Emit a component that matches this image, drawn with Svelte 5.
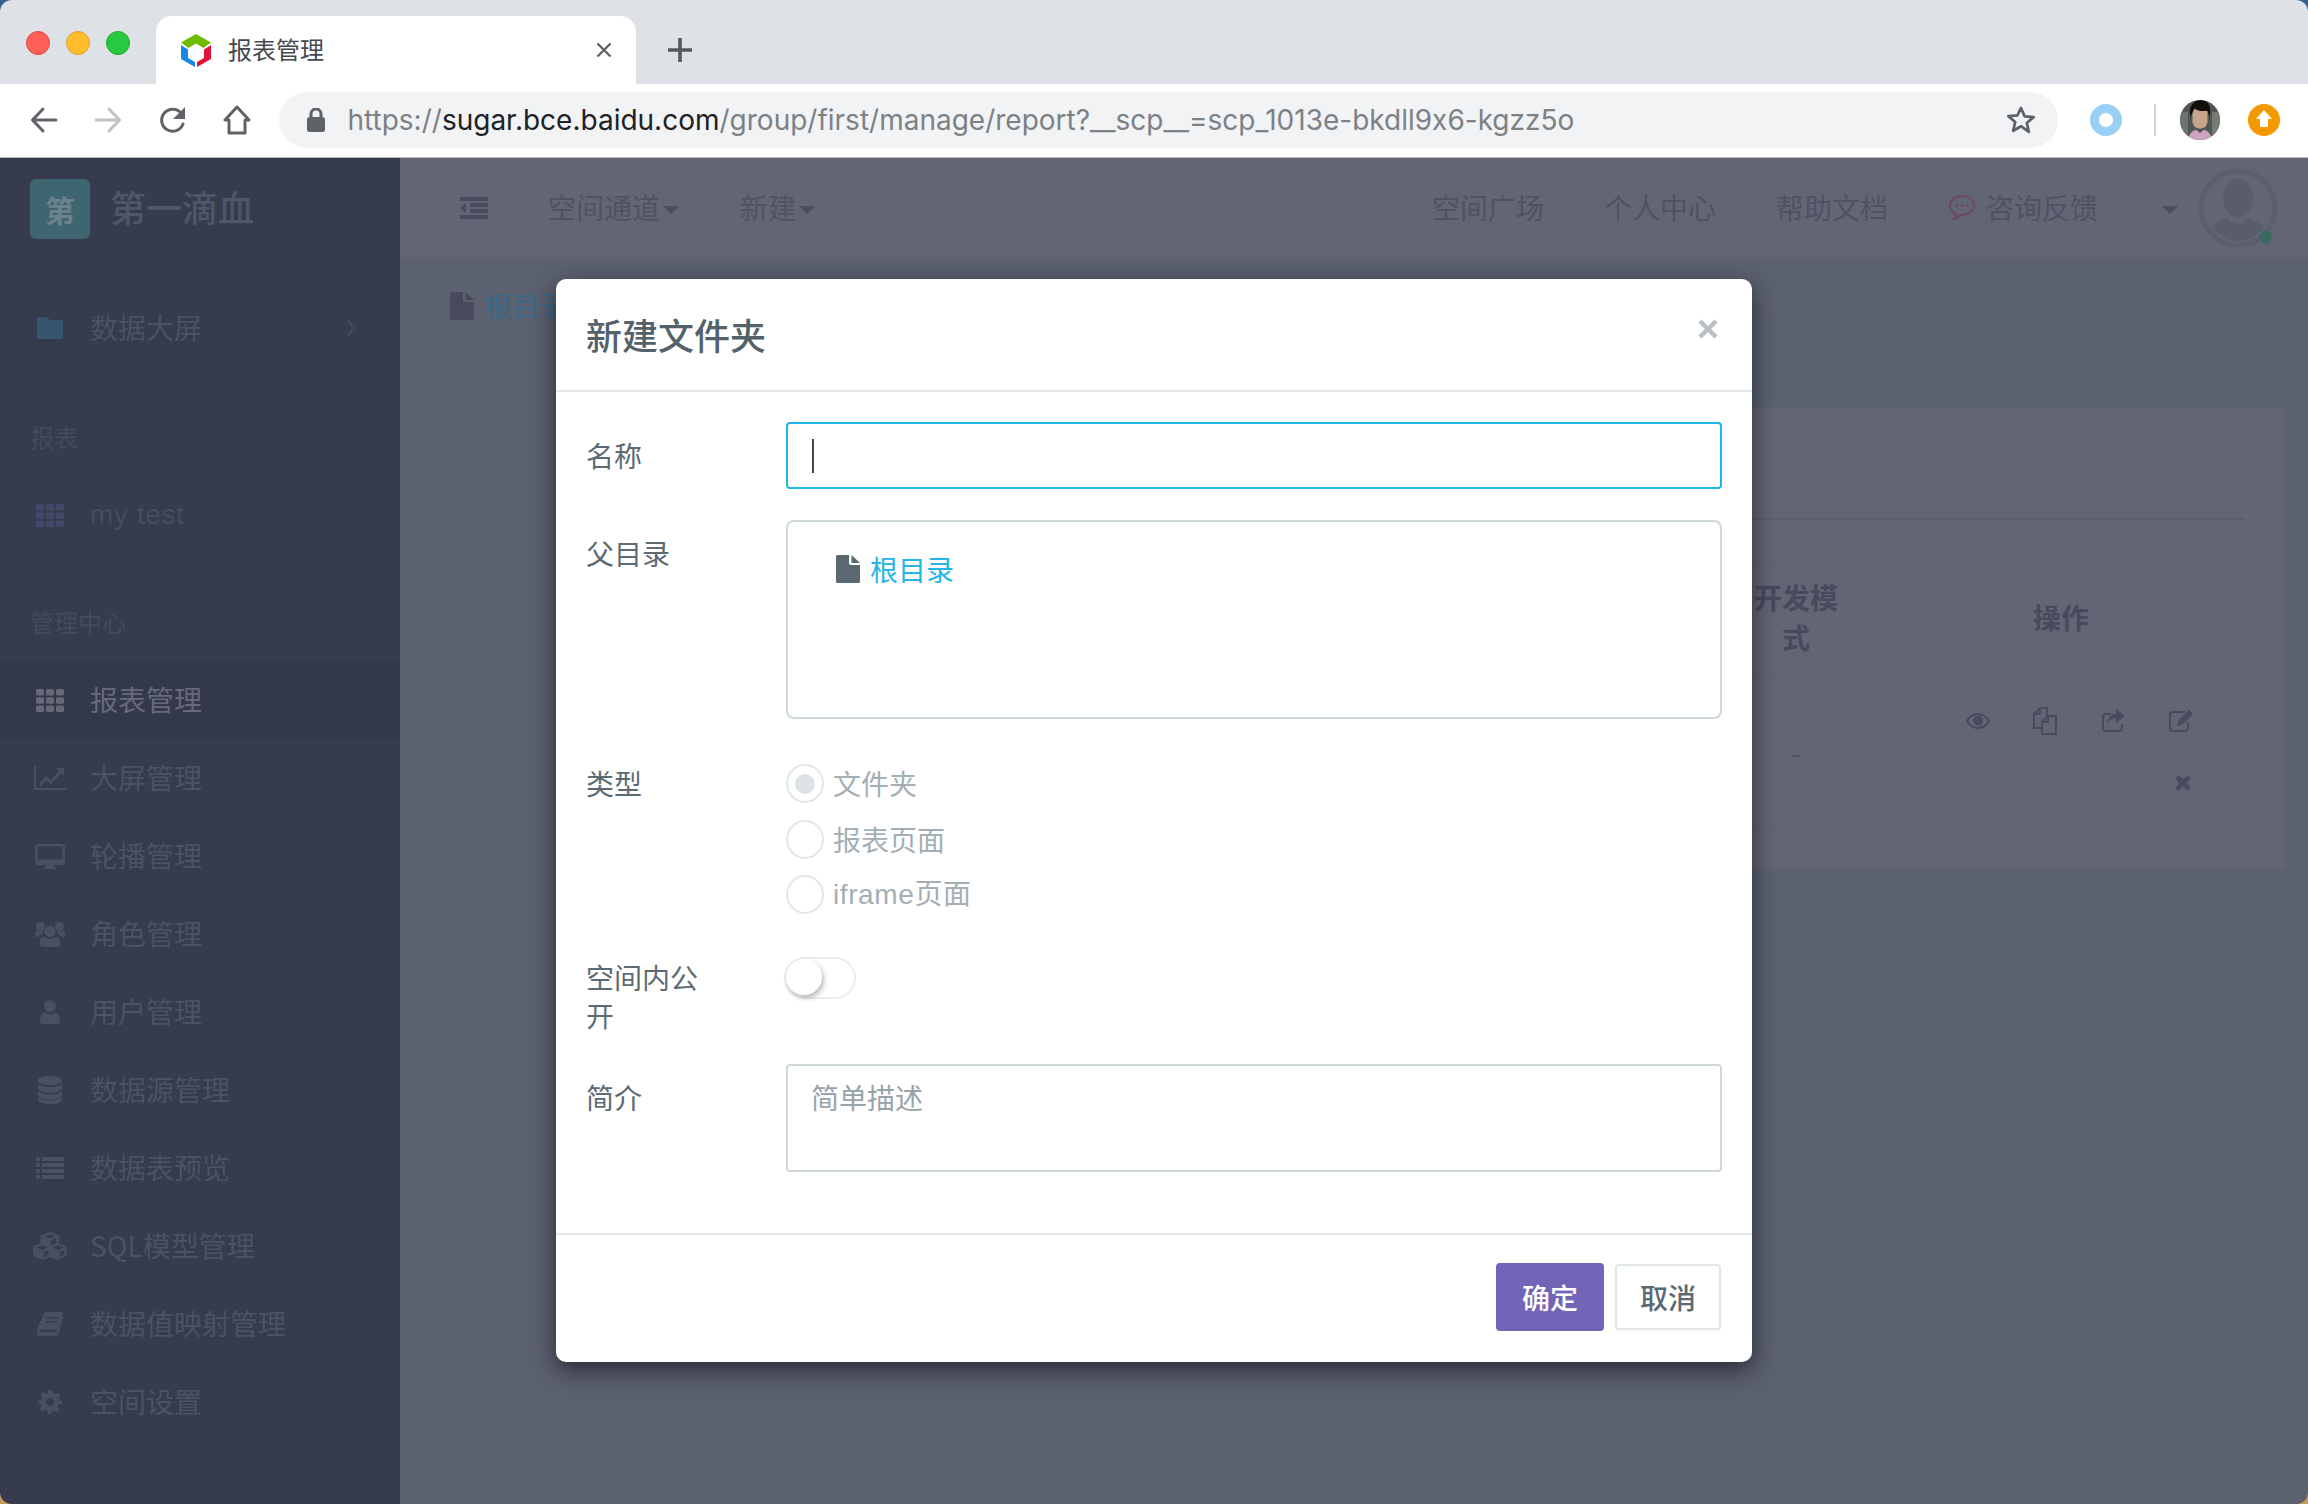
<script>
  const topItems = [
    { icon: 'th', label: '报表管理', active: true },
    { icon: 'chart', label: '大屏管理' },
    { icon: 'desktop', label: '轮播管理' },
    { icon: 'users', label: '角色管理' },
    { icon: 'user', label: '用户管理' },
    { icon: 'db', label: '数据源管理' },
    { icon: 'list', label: '数据表预览' },
    { icon: 'cubes', label: 'SQL模型管理' },
    { icon: 'book', label: '数据值映射管理' },
    { icon: 'gear', label: '空间设置' }
  ];
  const url = { a: 'https://', b: 'sugar.bce.baidu.com', c: '/group/first/manage/report?__scp__=scp_1013e-bkdll9x6-kgzz5o' };
</script>

{#snippet th(cls)}
  <svg class={cls} viewBox="0 0 28 23" width="28" height="23">
    {#each [0, 1, 2] as r}
      {#each [0, 1, 2] as c}
        <rect x={c * 10} y={r * 8.2} width="8" height="6.6" rx="1.5" />
      {/each}
    {/each}
  </svg>
{/snippet}

{#snippet icon(name)}
  {#if name === 'th'}
    {@render th('mi')}
  {:else if name === 'chart'}
    <svg class="mi" viewBox="0 0 32 24" width="32" height="24"><path d="M0 0h2v22h30v2H0z" /><path d="M5 18l7-8 5 4 8-9-3-3h8v8l-3-3-10 11-5-4-5 6z" /></svg>
  {:else if name === 'desktop'}
    <svg class="mi" viewBox="0 0 30 25" width="30" height="25"><path fill-rule="evenodd" d="M3 0h24a3 3 0 0 1 3 3v15a3 3 0 0 1-3 3h-8v2h2v2H9v-2h2v-2H3a3 3 0 0 1-3-3V3a3 3 0 0 1 3-3zm-.5 2.500v13h25v-13z" /></svg>
  {:else if name === 'users'}
    <svg class="mi" viewBox="0 0 30 25" width="30" height="25"><circle cx="15" cy="9.500" r="5.500" /><circle cx="5.500" cy="4.500" r="4.500" /><circle cx="24.500" cy="4.500" r="4.500" /><path d="M8 25c-1.500 0-3-1-3-3v-3c0-2.500 1.500-4.500 4-4.500 1.500 1.500 3.500 2 6 2s4.500-.5 6-2c2.500 0 4 2 4 4.500v3c0 2-1.500 3-3 3z" /><path d="M0 11.500c0-1.500 1-3 2.500-3 1.500 1 4 1 5.500.5-.5 1-1 2-.5 3-2 .5-3.500 1.500-4.500 3H2c-1 0-2-1-2-2zM30 11.500c0-1.500-1-3-2.500-3-1.500 1-4 1-5.500.5.5 1 1 2 .5 3 2 .5 3.500 1.500 4.500 3h1c1 0 2-1 2-2z" /></svg>
  {:else if name === 'user'}
    <svg class="mi" viewBox="0 0 20 24" width="20" height="24"><circle cx="10" cy="6" r="6" /><path d="M3 24c-2 0-3-1-3-3 0-4 1.500-8 5-8.500 1.500 1.500 3 2 5 2s3.500-.5 5-2c3.500.5 5 4.500 5 8.500 0 2-1 3-3 3z" /></svg>
  {:else if name === 'db'}
    <svg class="mi" viewBox="0 0 24 28" width="24" height="28"><ellipse cx="12" cy="4.500" rx="12" ry="4.500" /><path d="M0 7.500c2 2.500 7 3.500 12 3.500s10-1 12-3.500V12c0 2.500-5.500 4.500-12 4.500S0 14.500 0 12zM0 15c2 2.500 7 3.500 12 3.500s10-1 12-3.500v4.500c0 2.500-5.500 4-12 4s-12-1.500-12-4zM0 21.500c2 2 7 3 12 3s10-1 12-3V24c0 2.500-5.500 4-12 4S0 26.500 0 24z" /></svg>
  {:else if name === 'list'}
    <svg class="mi" viewBox="0 0 28 22" width="28" height="22"><path d="M0 0h4v4H0zM6 0h22v4H6zM0 6h4v4H0zM6 6h22v4H6zM0 12h4v4H0zM6 12h22v4H6zM0 18h4v4H0zM6 18h22v4H6z" /></svg>
  {:else if name === 'cubes'}
    <svg class="mi" viewBox="0 0 34 28" width="34" height="28"><path fill-rule="evenodd" d="M17 0l9 3.500v8l7.500 3v9.500L24 28l-7-3-7 3-10-4V14.500l7.500-3v-8zm0 2.500L11.500 4.500 17 6.500l5.500-2zM3 15.500l6 2.500 6-2.500-6-2zM19 15.500l6 2.500 6-2.500-6-2zM10.500 20v5l5-2.200v-5zM26.500 20v5l5-2.200v-5zM18 8v5.500l5.500-2.500V5.800z" /></svg>
  {:else if name === 'book'}
    <svg class="mi" viewBox="0 0 26 24" width="26" height="24"><path fill-rule="evenodd" d="M8 0h17c1 0 1 .8.8 1.500L21 19c-.5 2-1.500 3-3.500 3H3.500C1 22 0 20.500 0 18.500c0-1 .2-1.500.3-2.500zM9 5v1.500h12L21.500 5zM8 9v1.500h12l.5-1.500zM3.500 17.500c-1.200 0-1.500 1-1.300 1.800.2.800.8 1 1.600 1h14.400c.8 0 1.200-.4 1.400-1l.4-1.800z" /><path d="M24 5l2-.5L22 20c-.5 2.500-2 4-4.500 4H3.800c-2 0-3.800-1.500-3.800-4h2c0 1.500 1 2 2 2h13.500c1.800 0 2.700-.8 3.200-2.500z" /></svg>
  {:else if name === 'gear'}
    <svg class="mi" viewBox="0 0 24 24" width="24" height="24"><path fill-rule="evenodd" d="M10 0h4l.6 3.300 2.300 1L19.700 2.400l2.800 2.800-1.900 2.800 1 2.300L24 11v3l-3.400.6-1 2.300 1.900 2.800-2.800 2.800-2.800-1.900-2.300 1L13 24h-3l-.6-3.300-2.300-1-2.800 1.900-2.800-2.800 1.900-2.800-1-2.300L0 13.400v-3l3.400-.6 1-2.300L2.500 4.700l2.800-2.800 2.800 1.900 2.300-1zm2 8a4 4 0 1 0 0 8 4 4 0 0 0 0-8z" /></svg>
  {/if}
{/snippet}

{#snippet fileIcon(cls)}
  <svg class={cls} viewBox="0 0 24 28" width="24" height="28"><path d="M1.500 0H13v8a2 2 0 0 0 2 2h9v16.500a1.500 1.500 0 0 1-1.500 1.500h-21A1.500 1.500 0 0 1 0 26.500v-25A1.500 1.500 0 0 1 1.500 0z" /><path d="M15.500 0L24 8h-8.500z" /></svg>
{/snippet}

<div class="window">
  <header class="tabstrip">
    <div class="lights">
      <i class="light red"></i><i class="light yellow"></i><i class="light green"></i>
    </div>
    <div class="tab">
      <svg class="favicon" viewBox="0 0 30 33" width="30" height="33">
        <path fill="#6fb900" d="M15 0l15 8.500L22.500 14 15 9.500 7.500 14 0 8.500z" />
        <path fill="#1a86e8" d="M0 11l7 4.500v8.500l7 4v5L0 25z" />
        <path fill="#e0123c" d="M30 11l-7 4.500v8.500l-7 4v5l14-8z" />
      </svg>
      <span class="tab-title">报表管理</span>
      <svg class="tab-close" viewBox="0 0 16 16" width="16" height="16"><path d="M1.500 1.500l13 13M14.500 1.500l-13 13" /></svg>
    </div>
    <svg class="plus" viewBox="0 0 24 24" width="24" height="24"><path d="M12 1v22M1 12h22" /></svg>
  </header>

  <div class="toolbar">
    <svg class="tb" viewBox="0 0 28 28" width="28" height="28"><path d="M26 14H3M13 3L2.500 14 13 25" /></svg>
    <svg class="tb dim" viewBox="0 0 28 28" width="28" height="28"><path d="M2 14h23M15 3l10.500 11L15 25" /></svg>
    <svg class="tb reload" viewBox="0 0 30 30" width="30" height="30"><path d="M25 19a11 11 0 1 1-2-11" /><path class="solid" d="M27 2v12H15z" /></svg>
    <svg class="tb" viewBox="0 0 28 30" width="28" height="30"><path d="M14 2L2 15h4v13h16V15h4z" /></svg>
    <div class="omnibox">
      <svg class="lock" viewBox="0 0 18 24" width="18" height="24"><rect x="0" y="9" width="18" height="15" rx="2.500" /><path d="M4 10V6a5 5 0 0 1 10 0v4" /></svg>
      <span class="url"><span class="g">{url.a}</span><span class="d">{url.b}</span><span class="g">{url.c}</span></span>
      <svg class="star" viewBox="0 0 30 30" width="30" height="30"><path d="M15 3l3.600 8.300 9 .8-6.800 5.900 2 8.800L15 21.200l-7.800 4.600 2-8.800-6.800-5.900 9-.8z" /></svg>
    </div>
    <div class="ext-ring"></div>
    <div class="ext-sep"></div>
    <div class="avatar-photo">
      <svg viewBox="0 0 40 40" width="40" height="40">
        <rect width="40" height="40" fill="#4f5552" />
        <rect x="0" y="12" width="8" height="28" fill="#6f736d" />
        <rect x="32" y="12" width="8" height="28" fill="#777a73" />
        <path fill="#c9a48c" d="M12.500 13c0-4 3.500-6 7.500-6s7.500 2 7.500 6v8c0 5-3.500 7.500-7.500 7.500s-7.500-2.500-7.500-7.500z" />
        <path fill="#100d0c" d="M10.500 17C8 6 14 0 21 0s11 6 8.500 17l-2-6.500c-3 1-9.500 1-13-2-1 2-2 4-4 8.500z" />
        <path fill="#cfa3bf" d="M8 40c1-7 5-10 8.500-10l3.500 3 3.500-3c3.500 0 7.500 3 8.500 10z" />
      </svg>
    </div>
    <div class="ext-update">
      <svg viewBox="0 0 16 20" width="16" height="20"><path d="M8 0l8 9h-4v8H4V9H0z" /></svg>
    </div>
  </div>

  <div class="page">
    <aside class="sidebar">
      <div class="brand">
        <div class="brand-mark">第</div>
        <div class="brand-name">第一滴血</div>
      </div>
      <div class="nav-section first">
        <div class="nav-item">
          <span class="nav-icon">
            <svg class="folder" viewBox="0 0 26 22" width="26" height="22"><path d="M2 0h8l3 3h11a2 2 0 0 1 2 2v15a2 2 0 0 1-2 2H2a2 2 0 0 1-2-2V2a2 2 0 0 1 2-2z" /></svg>
          </span>
          <span class="nav-label">数据大屏</span>
          <svg class="chev" viewBox="0 0 10 16" width="10" height="16"><path d="M1 1l7 7-7 7" /></svg>
        </div>
      </div>
      <div class="nav-section second">
        <div class="nav-title">报表</div>
        <div class="nav-item dim">
          <span class="nav-icon">{@render th('mi purple')}</span>
          <span class="nav-label latin">my test</span>
        </div>
      </div>
      <div class="nav-section last">
        <div class="nav-title">管理中心</div>
        {#each topItems as item}
          <div class="nav-item" class:active={item.active}>
            <span class="nav-icon">{@render icon(item.icon)}</span>
            <span class="nav-label">{item.label}</span>
          </div>
        {/each}
      </div>
    </aside>

    <div class="main">
      <div class="topbar">
        <svg class="collapse" viewBox="0 0 28 22" width="28" height="22"><path d="M0 0h28v4H0zM10 6h18v4H10zM10 12h18v4H10zM0 18h28v4H0zM6 6v10l-6-5z" /></svg>
        <span class="top-link caret">空间通道</span>
        <span class="top-link caret second">新建</span>
        <div class="top-right">
          <span class="top-link">空间广场</span>
          <span class="top-link">个人中心</span>
          <span class="top-link">帮助文档</span>
          <span class="top-link feedback">
            <svg viewBox="0 0 28 28" width="28" height="28"><path d="M14 3c6.500 0 12 4 12 9.500S20.500 22 14 22h-2c-1 2-3 3.500-6 4 1.500-1.500 2-3 2-5C4 19.500 2 16 2 12.500 2 7 7.500 3 14 3z" /><circle class="dot" cx="9" cy="12.500" r="1.500" /><circle class="dot" cx="14" cy="12.500" r="1.500" /><circle class="dot" cx="19" cy="12.500" r="1.500" /></svg>
            咨询反馈
          </span>
          <i class="caret-solo"></i>
          <div class="user">
            <svg viewBox="0 0 80 80" width="80" height="80">
              <circle cx="40" cy="40" r="37" fill="none" stroke="#5a5e6d" stroke-width="5" />
              <ellipse cx="40" cy="30" rx="15" ry="19" fill="#585c6b" />
              <path d="M15 60c2-7 10-8 15-10 3 4 7 6 10 6s7-2 10-6c5 2 13 3 15 10-6 8-15 13-25 13s-19-5-25-13z" fill="#585c6b" />
            </svg>
            <i class="online"></i>
          </div>
        </div>
      </div>
      <div class="content">
        <div class="tree-pane">
          <div class="crumb">
            {@render fileIcon('crumb-file')}
            <span class="crumb-text">根目录</span>
          </div>
        </div>
        <div class="list-pane">
          <div class="card">
            <div class="card-head"></div>
            <div class="table">
              <div class="tr head">
                <div class="td fill"></div>
                <div class="td dev">开发模式</div>
                <div class="td ops">操作</div>
              </div>
              <div class="tr body">
                <div class="td fill"></div>
                <div class="td dev dash">-</div>
                <div class="td ops actions">
                  <div class="action-row">
                    <svg viewBox="0 0 24 16" width="24" height="16"><path fill-rule="evenodd" d="M12 0c5 0 9.500 3 12 8-2.500 5-7 8-12 8S2.500 13 0 8c2.500-5 7-8 12-8zm0 2C8 2 4.500 4.200 2.200 8 4.500 11.800 8 14 12 14s7.500-2.200 9.800-6C19.500 4.200 16 2 12 2z" /><circle cx="12" cy="7.500" r="5" /></svg>
                    <svg viewBox="0 0 24 28" width="24" height="28"><path class="stroke" d="M8 21H1V7l6-6h7v8M1 7h6V1" /><path class="stroke" d="M9 15l6-6h8v18H9zM9 15h6V9" /></svg>
                    <svg viewBox="0 0 24 24" width="24" height="24"><path class="stroke" d="M21 15v4a3 3 0 0 1-3 3H5a3 3 0 0 1-3-3V8a3 3 0 0 1 3-3h5" /><path d="M15 0l9 7-9 7V9.500c-4 0-7 1-9 6 0-6 3-10 9-11z" /></svg>
                    <svg viewBox="0 0 26 24" width="26" height="24"><path class="stroke" d="M20 13v6a3 3 0 0 1-3 3H5a3 3 0 0 1-3-3V6a3 3 0 0 1 3-3h12" /><path d="M21 1l4 4-11 11-5 1 1-5z" /></svg>
                  </div>
                  <div class="action-row end">
                    <svg viewBox="0 0 16 16" width="16" height="16"><path d="M3.500 0L8 4.500 12.500 0 16 3.500 11.500 8l4.500 4.500-3.500 3.500L8 11.500 3.500 16 0 12.500 4.500 8 0 3.500z" /></svg>
                  </div>
                </div>
              </div>
            </div>
          </div>
        </div>
      </div>
    </div>

    <div class="overlay">
      <div class="modal">
        <div class="modal-head">
          <span class="modal-title">新建文件夹</span>
          <svg class="modal-close" viewBox="0 0 22 22" width="22" height="22"><path d="M3 3l16 16M19 3L3 19" /></svg>
        </div>
        <div class="modal-body">
          <div class="row r-name">
            <div class="label">名称</div>
            <div class="field input focus"><i class="text-caret"></i></div>
          </div>
          <div class="row r-parent">
            <div class="label">父目录</div>
            <div class="field tree">
              {@render fileIcon('tree-file')}
              <span class="tree-link">根目录</span>
            </div>
          </div>
          <div class="row r-type">
            <div class="label">类型</div>
            <div class="radios">
              <div class="radio"><i class="circle on"></i><span>文件夹</span></div>
              <div class="radio"><i class="circle"></i><span>报表页面</span></div>
              <div class="radio"><i class="circle"></i><span class="latin">iframe页面</span></div>
            </div>
          </div>
          <div class="row r-public">
            <div class="label narrow">空间内公开</div>
            <div class="toggle"><i class="knob"></i></div>
          </div>
          <div class="row r-desc">
            <div class="label">简介</div>
            <div class="field area"><span class="placeholder">简单描述</span></div>
          </div>
        </div>
        <div class="modal-foot">
          <button class="btn primary">确定</button>
          <button class="btn plain">取消</button>
        </div>
      </div>
    </div>
  </div>
</div>

<style>
  :global(body) {
    margin: 0;
    background: linear-gradient(#35618f, #35618f 50%, #c59a62 50%);
  }
  .window {
    position: relative;
    width: 2308px;
    height: 1504px;
    overflow: hidden;
    border-radius: 12px;
    display: flex;
    flex-direction: column;
    font-family: "Noto Sans CJK SC", "Liberation Sans", sans-serif;
    font-size: 28px;
  }
  i { display: block; font-style: normal; }

  /* browser chrome */
  .tabstrip {
    height: 84px;
    flex: none;
    background: #dee1e6;
    display: flex;
    align-items: flex-end;
    box-sizing: border-box;
  }
  .lights {
    width: 156px;
    height: 84px;
    flex: none;
    box-sizing: border-box;
    padding: 31px 0 0 26px;
    display: flex;
    gap: 16px;
  }
  .light { width: 24px; height: 24px; border-radius: 50%; box-sizing: border-box; }
  .red { background: #ff5f57; border: 1px solid #e0443e; }
  .yellow { background: #ffbd2e; border: 1px solid #dea123; }
  .green { background: #28c840; border: 1px solid #1aab29; }
  .tab {
    width: 480px;
    height: 68px;
    background: #fff;
    border-radius: 16px 16px 0 0;
    display: flex;
    align-items: center;
    box-sizing: border-box;
    padding: 0 24px 0 25px;
    position: relative;
  }
  .favicon { flex: none; }
  .tab-title { margin: -3px 0 0 17px; font-size: 24px; color: #45484d; flex: 1; line-height: 32px; }
  .tab-close { fill: none; stroke: #5f6368; stroke-width: 2.400; }
  .plus { margin: 0 0 22px 32px; fill: none; stroke: #55585d; stroke-width: 3.600; stroke-linecap: round; }

  .toolbar {
    height: 74px;
    flex: none;
    box-sizing: border-box;
    background: #fff;
    border-bottom: 1px solid #b9bbbe;
    display: flex;
    align-items: center;
    padding: 0 28px 2px 30px;
    position: relative;
  }
  .tb {
    fill: none;
    stroke: #5f6368;
    stroke-width: 3;
    stroke-linejoin: round;
    stroke-linecap: round;
    flex: none;
    margin-right: 36px;
  }
  .tb.reload { margin-right: 34.500px; }
  .tb.dim { stroke: #bdc0c4; }
  .tb .solid { fill: #5f6368; stroke: none; }
  .omnibox {
    width: 1779px;
    height: 56px;
    border-radius: 28px;
    background: #f1f3f4;
    display: flex;
    align-items: center;
    flex: none;
    margin-left: -7.500px;
    padding: 0 22px 0 28px;
    box-sizing: border-box;
  }
  .lock { fill: #5f6368; flex: none; }
  .lock path { fill: none; stroke: #5f6368; stroke-width: 3; }
  .url {
    margin-left: 22.500px;
    flex: 1;
    font-family: Inter, "Liberation Sans", sans-serif;
    font-size: 28px;
    font-feature-settings: "calt" 0;
    white-space: nowrap;
    line-height: 36px;
    color: #80868b;
  }
  .url .d { color: #202124; }
  .url .g { color: #7c8186; }
  .star { fill: none; stroke: #5f6368; stroke-width: 2.800; stroke-linejoin: round; flex: none; }
  .ext-ring {
    width: 32px; height: 32px; border-radius: 50%;
    border: 9px solid #9ad0f5;
    box-sizing: border-box;
    margin-left: 32px;
    flex: none;
    background: #fff;
  }
  .ext-sep { width: 2px; height: 32px; background: #cfd1d4; margin: 0 24px 0 32px; flex: none; }
  .avatar-photo { width: 40px; height: 40px; border-radius: 50%; overflow: hidden; flex: none; }
  .avatar-photo svg { display: block; }
  .ext-update {
    width: 32px; height: 32px; border-radius: 50%;
    background: #f29900;
    margin-left: 28px;
    display: flex; align-items: center; justify-content: center;
    flex: none;
  }
  .ext-update svg { fill: #fff; }

  /* application */
  .page { flex: 1; display: flex; position: relative; min-height: 0; }
  .sidebar { width: 400px; flex: none; background: #363b4d; display: flex; flex-direction: column; color: #51576a; }
  .brand { height: 101px; flex: none; display: flex; align-items: center; padding-left: 30px; }
  .brand-mark {
    width: 60px; height: 60px; border-radius: 6px;
    background: #3e6570;
    display: flex; align-items: center; justify-content: center;
    color: #6b828d;
    font-size: 30px; font-weight: 700;
    line-height: 60px;
  }
  .brand-name { margin: -5px 0 0 20px; font-size: 36px; font-weight: 500; color: #50566a; line-height: 50px; }
  .nav-section { border-bottom: 1px solid #383d50; padding: 10px 0 20px; }
  .nav-section.first { padding: 30px 0 18px; }
  .nav-section.second { padding-top: 14px; }
  .nav-section.last { border-bottom: 0; padding-bottom: 0; }
  .nav-title {
    height: 76px; line-height: 74px;
    padding-left: 30px; font-size: 24px; color: #454a5c;
  }
  .nav-item {
    height: 78px;
    display: flex; align-items: center;
    position: relative;
    color: #4c5265;
  }
  .nav-item.active { background: #33384b; color: #666a7a; }
  .nav-item.dim { color: #464c5f; }
  .nav-icon { width: 90px; flex: none; display: flex; justify-content: center; padding-left: 10px; box-sizing: border-box; }
  .nav-label { line-height: 40px; margin-top: -2px; }
  .nav-label.latin { margin-top: 0; }
  .latin { font-family: "Liberation Sans", "Noto Sans CJK SC", sans-serif; letter-spacing: .6px; }
  .mi { fill: #4a5064; display: block; }
  .nav-item.active :global(.mi) { fill: #656978; }
  .purple { fill: #45476a; }
  .folder { fill: #36566f; display: block; }
  .chev { position: absolute; left: 347px; fill: none; stroke: #474d60; stroke-width: 2; }

  .main { flex: 1; min-width: 0; display: flex; flex-direction: column; }
  .topbar {
    height: 101px;
    flex: none;
    box-sizing: border-box;
    background: #626574;
    border-bottom: 2px solid #5e6170;
    display: flex;
    align-items: center;
    padding: 0 30px 0 60px;
    color: #4e5263;
  }
  .collapse { fill: #494c5e; flex: none; margin-right: 60px; }
  .top-link { font-size: 28px; line-height: 40px; white-space: nowrap; display: flex; align-items: center; margin-top: -2px; }
  .top-link.caret::after {
    content: "";
    border-top: 8px solid #4a4e5f;
    border-left: 8px solid transparent;
    border-right: 8px solid transparent;
    margin-left: 3px;
    margin-top: 6px;
  }
  .top-link.second { margin-left: 61px; }
  .top-right { margin-left: auto; display: flex; align-items: center; gap: 60px; }
  .feedback { gap: 10px; }
  .feedback svg { fill: none; stroke: #6e4a5c; stroke-width: 2; }
  .feedback .dot { fill: #6e4a5c; stroke: none; }
  .caret-solo {
    border-top: 8px solid #4a4e5f;
    border-left: 8px solid transparent;
    border-right: 8px solid transparent;
    margin: 4px 0 0 4px;
  }
  .user { position: relative; width: 80px; height: 80px; margin-left: -40px; flex: none; }
  .user svg { display: block; }
  .online { position: absolute; left: 62px; top: 62px; width: 12px; height: 14px; border-radius: 50%; background: #3a6a5f; }

  .content { flex: 1; display: flex; min-height: 0; background: #5c616f; }
  .tree-pane { width: 479px; flex: none; box-sizing: border-box; padding: 33px 0 0 50px; border-right: 1px solid #5a5e6b; }
  .crumb { display: flex; align-items: center; height: 28px; gap: 10px; white-space: nowrap; }
  .crumb-file { fill: #464a5c; flex: none; }
  .crumb-text { color: #3a6888; font-size: 28px; line-height: 40px; margin-top: -2px; }
  .list-pane { flex: 1; min-width: 0; box-sizing: border-box; padding: 148px 23px 0 0; }
  .card { height: 463px; background: #626574; box-sizing: border-box; padding: 0 39px 0 40px; border: 1px solid #5f6371; }
  .card-head { height: 110px; border-bottom: 2px solid #5a5e6c; }
  .table { margin-top: 42px; border: 1px solid #5e6270; height: 268px; box-sizing: border-box; display: flex; flex-direction: column; }
  .tr { display: flex; }
  .tr.head { height: 114px; border-bottom: 1px solid #5e6270; color: #464a5c; font-weight: 700; }
  .tr.body { flex: 1; }
  .td.fill { flex: 1; }
  .td.dev { width: 162px; text-align: center; line-height: 40px; padding: 14px 26px 0; box-sizing: border-box; }
  .td.ops { width: 367px; border-left: 1px solid #5e6270; box-sizing: border-box; text-align: center; line-height: 108px; }
  .td.dash { color: #4a4e5f; padding-top: 54px; font-weight: 400; }
  .actions { display: flex; flex-direction: column; padding: 27px 50px 0 88px; }
  .action-row { display: flex; justify-content: space-between; align-items: center; height: 32px; }
  .action-row.end { justify-content: flex-end; margin-top: 29.500px; padding-right: 3px; }
  .action-row svg { fill: #474b5d; flex: none; overflow: visible; }
  .action-row .stroke { fill: none; stroke: #474b5d; stroke-width: 2; }

  /* dialog over the page */
  .overlay { position: absolute; inset: 0; display: flex; justify-content: center; align-items: flex-start; padding-top: 121px; }
  .modal {
    width: 1196px;
    height: 1083px;
    background: #fff;
    border-radius: 10px;
    display: flex;
    flex-direction: column;
    box-shadow: 0 8px 24px rgba(18, 19, 28, .7);
    color: #5c6873;
  }
  .modal-head {
    height: 113px;
    flex: none;
    box-sizing: border-box;
    border-bottom: 2px solid #e4e7e9;
    display: flex;
    align-items: center;
    justify-content: space-between;
    padding: 0 33px 0 30px;
  }
  .modal-title { font-size: 36px; line-height: 50px; color: #536269; font-weight: 500; margin-top: -2px; }
  .modal-close { fill: none; stroke: #b9bfc3; stroke-width: 4.500; margin-top: -11px; }
  .modal-body { flex: 1; padding: 30px 30.500px 0 30px; box-sizing: border-box; display: flex; flex-direction: column; }
  .row { display: flex; align-items: flex-start; }
  .label { width: 200px; flex: none; line-height: 39px; font-size: 28px; color: #5c6b73; }
  .label.narrow { width: 120px; margin-right: 80px; line-height: 38px; }
  .field { flex: 1; box-sizing: border-box; border: 2px solid #cfd8dc; border-radius: 4px; }
  .r-name { height: 98px; }
  .r-name .label { padding-top: 14px; }
  .input { height: 67px; display: flex; align-items: center; padding-left: 24px; }
  .input.focus { border-color: #20b4e6; border-radius: 4px; }
  .text-caret { width: 2px; height: 34px; background: #444; }
  .r-parent { height: 244px; }
  .r-parent .label { padding-top: 14px; }
  .tree { height: 199px; border-radius: 8px; display: flex; align-items: flex-start; padding: 33px 0 0 48px; gap: 10px; }
  .tree-file { fill: #5a686f; flex: none; }
  .tree-link { color: #23b5e6; font-size: 28px; line-height: 32px; margin-top: -2px; }
  .r-type { height: 193px; }
  .r-type .label { padding-top: 0; }
  .radios { display: flex; flex-direction: column; gap: 16.500px; }
  .radio { display: flex; align-items: center; height: 39px; gap: 9px; color: #a3afb5; line-height: 39px; }
  .circle { width: 38px; height: 39px; border-radius: 50%; box-sizing: border-box; border: 2px solid #e1e8ea; display: flex; align-items: center; justify-content: center; background: #fff; }
  .circle.on::after { content: ""; width: 20px; height: 20px; border-radius: 50%; background: #dde4e7; }
  .r-public { height: 107px; }
  .r-public .label { padding-top: 1px; }
  .toggle { width: 72px; height: 42px; box-sizing: border-box; border: 2px solid #e9edef; border-radius: 21px; position: relative; margin: 0 0 0 -2px; }
  .knob { position: absolute; left: 0; top: 0; width: 36px; height: 36px; border-radius: 50%; background: #fff; box-shadow: 2px 3px 5px rgba(60, 60, 60, .35); }
  .r-desc .label { padding-top: 14px; }
  .area { height: 108px; padding: 10.500px 23px 0; }
  .placeholder { color: #98a3a9; line-height: 39px; }
  .modal-foot {
    height: 129px;
    flex: none;
    box-sizing: border-box;
    border-top: 2px solid #e4e7e9;
    display: flex;
    justify-content: flex-end;
    align-items: center;
    gap: 11px;
    padding: 0 31px 3px 0;
  }
  .btn {
    font-family: inherit;
    font-size: 28px;
    font-weight: 500;
    line-height: 40px;
    border-radius: 4px;
    padding: 0;
    cursor: pointer;
  }
  .btn.primary { width: 108px; height: 68px; background: #7265b8; border: 0; color: #fff; }
  .btn.plain { width: 106px; height: 66px; background: #fff; border: 2px solid #e0e7e9; color: #5a6a70; box-shadow: 0 1px 2px rgba(0,0,0,.05); }
</style>
